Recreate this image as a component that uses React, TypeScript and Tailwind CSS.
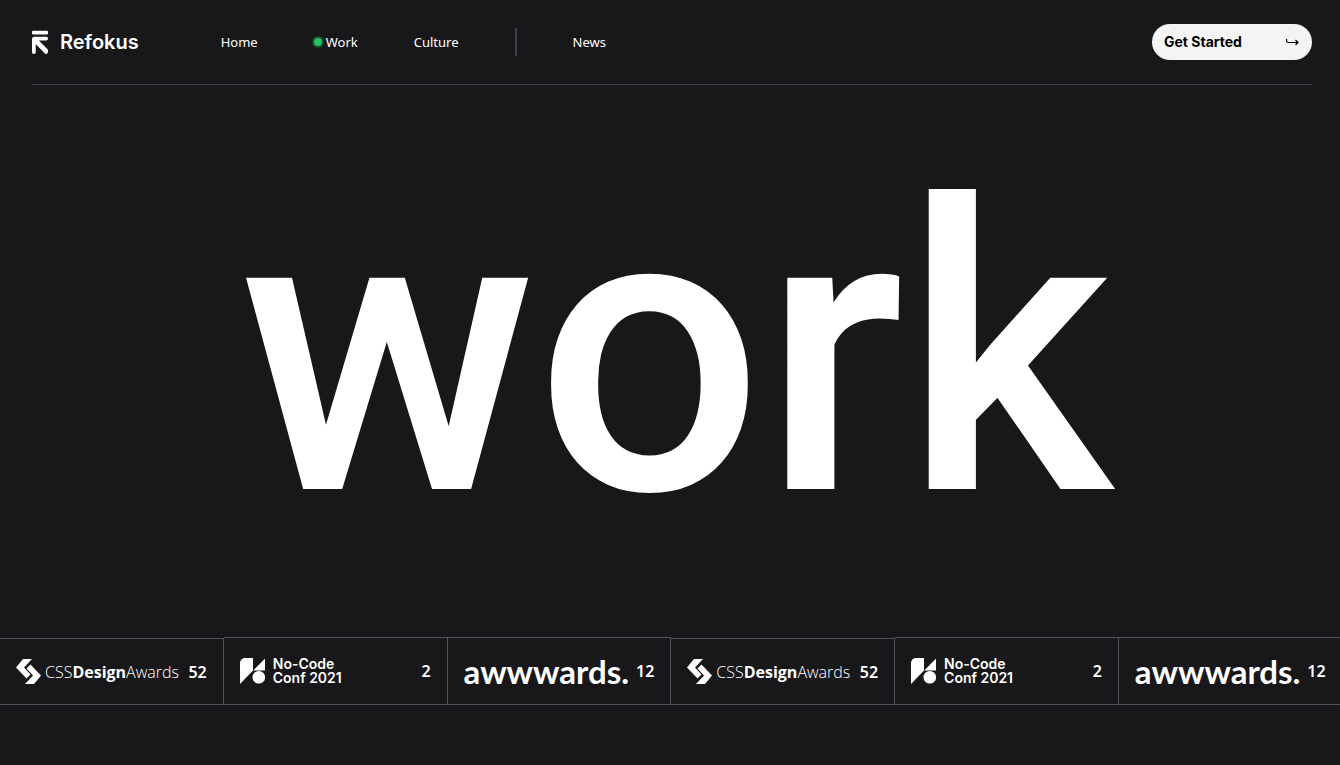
import React from "react";

const navLink = "text-[13px] leading-5 text-white";

function RefokusMark() {
  return (
    <svg width="16" height="24" viewBox="0 0 16 24" aria-hidden="true" fill="#fff">
      <rect y="0.800" width="16" height="3.700" rx="1.300" />
      <path d="M0 8.300 1.500 6.800H14.800L16 8v1.200L14.700 10.500H6.900L16 19.700V22.500L14.700 24H13.400L3.700 14V22.700L2.500 24H1.200L0 22.700z" />
    </svg>
  );
}

function CssDesignAwards() {
  return (
    <div className="flex items-center gap-1">
      <svg width="25" height="25" viewBox="0 0 25 25" aria-hidden="true" fill="#fff">
        <path d="M7 0h9L8 8.500l6.500 7-4 4L0 8.500z" />
        <path d="M18 25H9l8-8.500-6.500-7 4-4L25 16.500z" />
      </svg>
      <span className="font-['Open_Sans',sans-serif] text-base leading-6 font-light">
        CSS<b className="font-bold">Design</b>Awards
      </span>
    </div>
  );
}

function NoCodeConf() {
  return (
    <div className="flex items-center gap-2">
      <svg width="25" height="26" viewBox="0 0 25 26" aria-hidden="true" fill="#fff">
        <path d="M5 0h8v12.500L0 26V5a5 5 0 0 1 5-5z" />
        <path d="M25.500 0v12.500H13.300z" />
        <circle cx="18.800" cy="19.300" r="6.300" />
      </svg>
      <span className="font-[Inter,sans-serif] text-sm leading-[14px] font-semibold">
        No-Code
        <br />
        Conf 2021
      </span>
    </div>
  );
}

function Awwwards() {
  return <span className="font-[Lato,sans-serif] text-[33px] leading-9 font-bold">awwwards.</span>;
}

const awards = [
  { Logo: CssDesignAwards, count: 52, height: "h-[67px]" },
  { Logo: NoCodeConf, count: 2, height: "h-[68px]" },
  { Logo: Awwwards, count: 12, height: "h-[68px]" },
];

export default function App() {
  return (
    <div className="min-h-screen overflow-x-hidden bg-[#18181a] font-['Noto_Sans',sans-serif] text-white">
      <header className="mr-7 ml-8 flex items-center justify-between border-b border-zinc-700 py-6">
        <div className="flex items-center">
          <a href="#" className="flex items-center gap-3 font-[Inter,sans-serif] text-xl leading-6 font-semibold">
            <RefokusMark />
            Refokus
          </a>
          <nav className="ml-[82px] flex items-center gap-14">
            <a href="#" className={navLink}>Home</a>
            <a href="#" className={`${navLink} flex items-center gap-1`}>
              <span className="size-2 rounded-full bg-[#22c55e] ring-2 ring-[#1c4a2e]" />
              Work
            </a>
            <a href="#" className={navLink}>Culture</a>
            <span className="h-7 w-0.5 bg-zinc-700" />
            <a href="#" className={navLink}>News</a>
          </nav>
        </div>
        <button className="flex h-9 w-40 items-center justify-between rounded-full bg-zinc-100 px-3 font-[Inter,sans-serif] text-sm font-bold text-black">
          Get Started
          <svg width="14" height="9" viewBox="0 0 14 9" fill="none" stroke="#000" strokeWidth="1.200" aria-hidden="true">
            <path d="M.6 1v2a1.500 1.500 0 0 0 1.500 1.500H12M9.500 2 12 4.500 9.500 7" />
          </svg>
        </button>
      </header>
      <main>
        <h1 className="pt-4 pb-8 pl-3 text-center font-[Roboto,sans-serif] text-[400px] leading-[504px] font-medium">work</h1>
        <ul className="flex items-end">
          {[...awards, ...awards].map(({ Logo, count, height }, i) => (
            <li
              key={i}
              className={`${height} flex w-[16.7%] shrink-0 items-center justify-between border-t border-r border-b border-zinc-600 px-4`}
            >
              <Logo />
              <span className="text-base leading-6 font-semibold">{count}</span>
            </li>
          ))}
        </ul>
      </main>
    </div>
  );
}
